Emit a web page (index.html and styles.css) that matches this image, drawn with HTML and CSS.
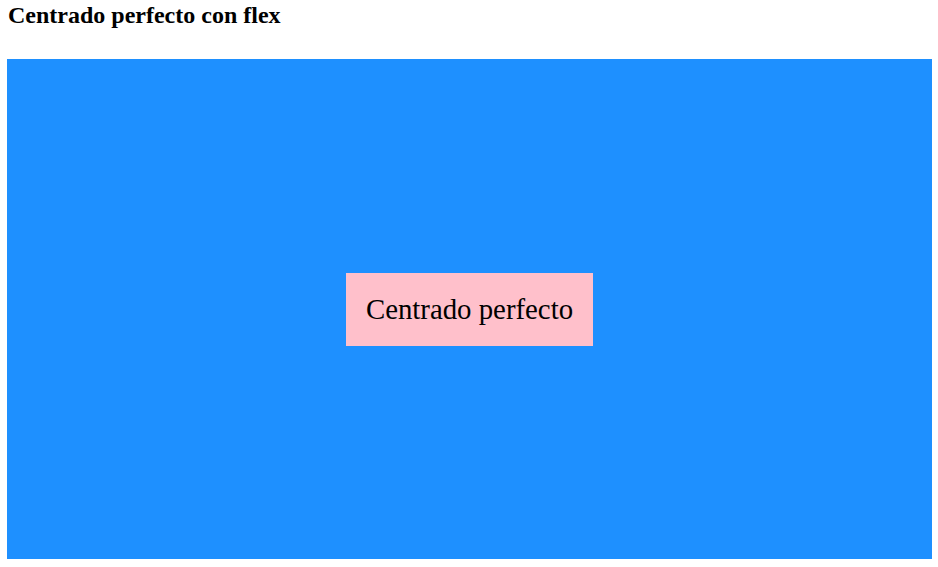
FILE: index.html
```html
<!DOCTYPE html>
<html lang="es">
<head>
<meta charset="utf-8">
<title>Centrado perfecto con flex</title>
<link rel="stylesheet" href="styles.css">
</head>
<body>
<h3 class="title">Centrado perfecto con flex</h3>
<div class="stage">
  <div class="box">Centrado perfecto</div>
</div>
</body>
</html>
```
FILE: styles.css
```css
html, body {
  margin: 0;
  padding: 0;
  background: #ffffff;
}
body {
  font-family: "Liberation Serif", "Times New Roman", serif;
  color: #000000;
}
.title {
  margin: 0;
  padding: 2px 8px 0;
  font-size: 24px;
  font-weight: bold;
  line-height: 27px;
}
.stage {
  margin: 30px 0 0 7px;
  width: 925px;
  height: 500px;
  background: #1e90ff;
  display: flex;
  justify-content: center;
  align-items: center;
}
.box {
  background: #ffc0cb;
  font-size: 28.8px;
  line-height: 33px;
  padding: 20px;
}
```
